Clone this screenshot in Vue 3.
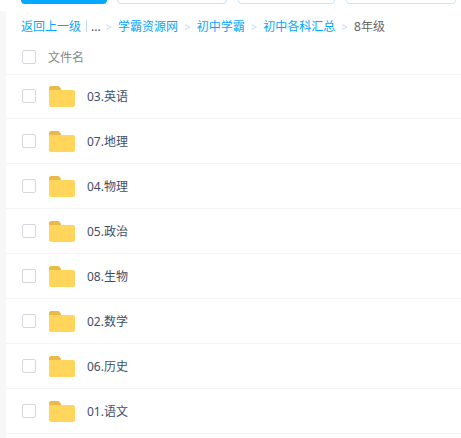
<template>
  <div class="page">
    <div class="side"></div>
    <div class="main">
      <div class="toolbar">
        <div class="btn primary"></div>
        <div class="btn w1"></div>
        <div class="btn w2"></div>
        <div class="btn w3"></div>
      </div>
      <div class="crumbs">
        <span class="link">返回上一级</span>
        <span class="bar"></span>
        <span class="dots">...</span>
        <template v-for="c in crumbs" :key="c">
          <span class="sep">&gt;</span>
          <span class="link">{{ c }}</span>
        </template>
        <span class="sep">&gt;</span>
        <span class="current">8年级</span>
      </div>
      <div class="head">
        <span class="check"></span>
        <span class="head-name">文件名</span>
      </div>
      <div v-for="f in files" :key="f" class="row">
        <span class="check"></span>
        <svg class="folder" width="26" height="21" viewBox="0 0 26 21">
          <path d="M0 2a2 2 0 0 1 2-2h7a2 2 0 0 1 1.5.7L12 3v2H0z" fill="#e9b949" />
          <path d="M0 4h24a2 2 0 0 1 2 2v13a2 2 0 0 1-2 2H2a2 2 0 0 1-2-2z" fill="#ffd55c" />
        </svg>
        <span class="name">{{ f }}</span>
      </div>
    </div>
  </div>
</template>

<script setup>
const crumbs = ['学霸资源网', '初中学霸', '初中各科汇总']
const files = ['03.英语', '07.地理', '04.物理', '05.政治', '08.生物', '02.数学', '06.历史', '01.语文']
</script>

<style>
html, body {
  background: #fff;
  overflow: hidden;
}
</style>

<style scoped>
.page {
  display: flex;
  width: 461px;
  height: 438px;
  overflow: hidden;
  font-family: "Noto Sans", "Noto Sans CJK SC", sans-serif;
  font-size: 12px;
  color: #424e67;
}
.side {
  width: 6px;
  margin-top: 11px;
  background: #f7f7f7;
  flex-shrink: 0;
}
.main {
  flex: 1;
  min-width: 0;
}
.toolbar {
  display: flex;
  gap: 10px;
  height: 4px;
  padding-left: 15px;
  overflow: hidden;
}
.btn {
  height: 4px;
  box-sizing: border-box;
  border: 1px solid #c8e9fb;
  border-top: none;
  border-radius: 0 0 6px 6px;
}
.primary {
  width: 86px;
  background: #06a7ff;
  border: none;
}
.w1 { width: 110px; }
.w2 { width: 97px; margin: 0 1px; }
.w3 { width: 110px; }
.crumbs {
  display: flex;
  align-items: center;
  height: 44px;
  padding-left: 15px;
  white-space: nowrap;
}
.link {
  color: #06a7ff;
}
.bar {
  width: 1px;
  height: 12px;
  margin: 0 4px 0 5px;
  background: #c4d8f4;
}
.dots {
  color: #424e67;
  margin-right: -1.4px;
}
.sep {
  margin: 0 6.2px;
  color: #c4d8f4;
  font-size: 11px;
}
.current {
  color: #666;
}
.head {
  display: flex;
  align-items: center;
  box-sizing: border-box;
  height: 27px;
  padding: 0 0 8px 16px;
  border-bottom: 1px solid #f4f5f9;
}
.head-name {
  margin-left: 12px;
  color: #888;
}
.check {
  box-sizing: border-box;
  width: 14px;
  height: 14px;
  border: 1px solid #d4d7de;
  border-radius: 2px;
  flex-shrink: 0;
}
.row {
  display: flex;
  align-items: center;
  box-sizing: border-box;
  height: 45px;
  padding-left: 16px;
  border-bottom: 1px solid #f4f5f9;
}
.head + .row {
  height: 44px;
  padding-bottom: 1px;
}
.folder {
  margin-left: 13px;
  margin-top: 1px;
  flex-shrink: 0;
}
.name {
  margin-left: 12px;
}
</style>
